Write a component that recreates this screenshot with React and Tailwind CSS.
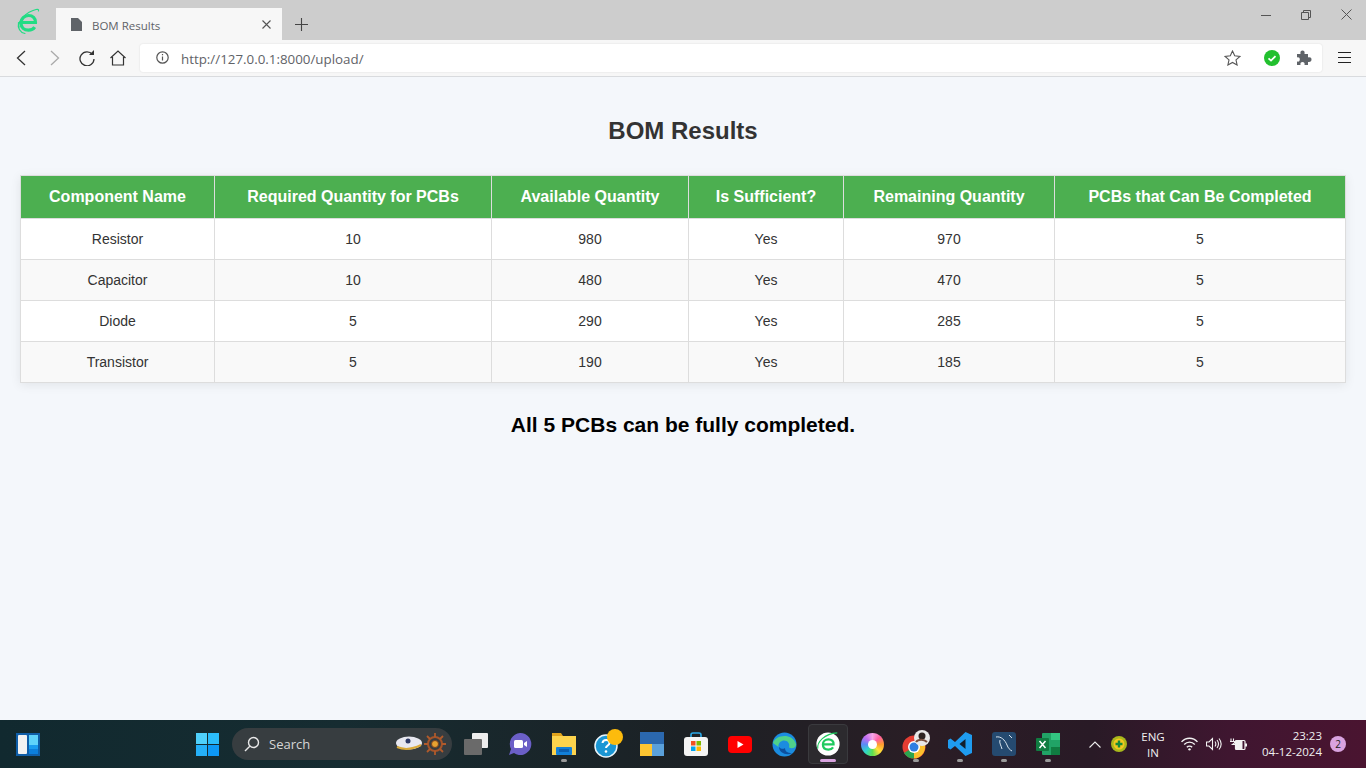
import React from 'react';

const columns = [
  { name: 'Component Name', width: 194 },
  { name: 'Required Quantity for PCBs', width: 277 },
  { name: 'Available Quantity', width: 197 },
  { name: 'Is Sufficient?', width: 155 },
  { name: 'Remaining Quantity', width: 211 },
  { name: 'PCBs that Can Be Completed', width: 291 },
];

const rows = [
  ['Resistor', 10, 980, 'Yes', 970, 5],
  ['Capacitor', 10, 480, 'Yes', 470, 5],
  ['Diode', 5, 290, 'Yes', 285, 5],
  ['Transistor', 5, 190, 'Yes', 185, 5],
];

const uiFont = "font-['Open_Sans','Noto_Sans',sans-serif]";

function BrowserLogo() {
  return (
    <svg width="27" height="27" viewBox="0 0 27 27" fill="none">
      <path d="M6.500 14.500h14c.3-4.500-3-7-6.800-7-4.400 0-7.700 3.300-7.700 7.500 0 4.400 3.300 7.200 7.500 7.200 2.700 0 4.900-1 6.200-3" stroke="#22dc84" strokeWidth="3.200" />
      <path d="M4 19C2.500 13 11 4 21 1.500c2-.5 2.800 0 2.500 1.500" stroke="#22dc84" strokeWidth="1.200" strokeLinecap="round" />
      <path d="M3.500 14.500C2.500 20 5 24.500 10 25.500" stroke="#22dc84" strokeWidth="1.200" strokeLinecap="round" />
    </svg>
  );
}

function TitleBar() {
  return (
    <div className="flex h-10 shrink-0 items-end bg-[#cdcdcd]">
      <div className="mb-[5px] ml-[15px] mr-[14px] h-[27px] w-[27px]">
        <BrowserLogo />
      </div>
      <div className={`flex h-8 w-[226px] items-center bg-[#f7f7f7] pl-[15px] pr-[11px] ${uiFont}`}>
        <svg width="11" height="13" viewBox="0 0 11 13" fill="#5f6368">
          <path d="M0 0h7l4 4v9H0z" />
        </svg>
        <span className="ml-[10px] mt-[3px] flex-1 text-[11.500px] text-[#5f6368]">BOM Results</span>
        <svg width="9" height="9" viewBox="0 0 9 9" stroke="#555" strokeWidth="1.100">
          <path d="M.5.5l8 8M8.500.5l-8 8" />
        </svg>
      </div>
      <svg className="mb-[9px] ml-[13px]" width="13" height="13" viewBox="0 0 13 13" stroke="#444" strokeWidth="1.100">
        <path d="M6.500 0v13M0 6.500h13" />
      </svg>
      <div className="mb-[20px] ml-auto flex items-center">
        <div className="flex w-10 justify-center">
          <svg width="10" height="10" viewBox="0 0 10 10" stroke="#555"><path d="M0 5.500h10" /></svg>
        </div>
        <div className="flex w-10 justify-center">
          <svg width="10" height="10" viewBox="0 0 10 10" fill="none" stroke="#555">
            <path d="M.5 2.500h7v7h-7zM2.500 2.500v-2h7v7h-2" />
          </svg>
        </div>
        <div className="flex w-10 justify-center">
          <svg width="11" height="11" viewBox="0 0 11 11" stroke="#555"><path d="M.5.5l10 10M10.500.5l-10 10" /></svg>
        </div>
      </div>
    </div>
  );
}

function Toolbar() {
  return (
    <div className="flex h-[37px] shrink-0 items-center border-b border-[#d9dbde] bg-[#f7f7f7] pb-[1px]">
      <svg className="ml-[16px]" width="10" height="16" viewBox="0 0 10 16" fill="none" stroke="#333" strokeWidth="1.300">
        <path d="M9 1L1.500 8 9 15" />
      </svg>
      <svg className="ml-[24px]" width="10" height="16" viewBox="0 0 10 16" fill="none" stroke="#aaa" strokeWidth="1.300">
        <path d="M1 1l7.500 7L1 15" />
      </svg>
      <svg className="ml-[19px]" width="16" height="16" viewBox="0 0 16 16" fill="none" stroke="#333" strokeWidth="1.300">
        <path d="M13.500 4.500A7 7 0 1 0 15 9" />
        <path d="M10 5h5V0z" fill="#333" stroke="none" />
      </svg>
      <svg className="ml-[15px]" width="16" height="16" viewBox="0 0 16 16" fill="none" stroke="#333" strokeWidth="1.200">
        <path d="M.5 8L8 1l7.500 7M2.500 7v8h11V7" />
      </svg>
      <div className="ml-[14px] flex h-7 w-[1182px] items-center rounded-[3px] bg-white pl-[16px] pr-[10px] shadow-[0_0_2px_rgba(0,0,0,0.12)]">
        <svg width="13" height="13" viewBox="0 0 13 13" fill="none" stroke="#555" strokeWidth="1.200">
          <circle cx="6.500" cy="6.500" r="5.700" />
          <path d="M6.500 5.500v4M6.500 3v1.300" />
        </svg>
        <span className={`ml-[12px] mt-[3px] flex-1 text-[13.350px] text-[#5f6368] ${uiFont}`}>http://127.0.0.1:8000/upload/</span>
        <svg width="17" height="16" viewBox="0 0 17 16" fill="none" stroke="#555" strokeWidth="1.100">
          <path d="M8.500 1l2.200 4.800 5.200.6-3.900 3.500 1.100 5.100-4.600-2.600L3.900 15 5 9.900 1.100 6.400l5.200-.6z" />
        </svg>
        <svg className="ml-[23px]" width="16" height="16" viewBox="0 0 16 16" fill="none">
          <circle cx="8" cy="8" r="8" fill="#22c02e" />
          <path d="M4.500 8.300l2.500 2.300 4.500-4.500" stroke="#fff" strokeWidth="1.800" />
        </svg>
        <svg className="ml-[16px]" width="16" height="16" viewBox="0 0 16 16" fill="#5f6368">
          <path d="M1 4h3.500C4 1.500 5 .5 6.500.5S9 1.500 8.500 4H12v3.500c2.500-.5 3.500.5 3.500 2s-1 3-3.500 2.500V15H8.500c.5-2-.5-3-2-3s-2.500 1-2 3H1v-3.500c2 .5 2.800-.5 2.800-2S3 7 1 7.500z" />
        </svg>
      </div>
      <svg className="ml-[16px]" width="13" height="11" viewBox="0 0 13 11" stroke="#222" strokeWidth="1.100">
        <path d="M0 .5h13M0 5.500h13M0 10.500h13" />
      </svg>
    </div>
  );
}

function ResultsTable() {
  return (
    <table className="w-[1325px] table-fixed border-collapse bg-white shadow-[0_2px_10px_rgba(0,0,0,0.08)]">
      <colgroup>
        {columns.map(col => (
          <col key={col.name} style={{ width: col.width }} />
        ))}
      </colgroup>
      <thead>
        <tr className="bg-[#4caf50] text-white">
          {columns.map(col => (
            <th key={col.name} className="h-[43px] border border-[#ddd] p-0 text-center text-[16px] font-bold">
              {col.name}
            </th>
          ))}
        </tr>
      </thead>
      <tbody>
        {rows.map((row, r) => (
          <tr key={row[0]} className={r % 2 === 1 ? 'bg-[#f9f9f9]' : 'bg-white'}>
            {row.map((cell, c) => (
              <td key={c} className="h-[41px] border border-[#ddd] p-0 text-center text-[14px] text-[#333]">
                {cell}
              </td>
            ))}
          </tr>
        ))}
      </tbody>
    </table>
  );
}

function Dash({ active }) {
  return <span className={active ? 'absolute bottom-[1px] h-[3px] w-4 rounded-full bg-[#d9a3e0]' : 'absolute bottom-[2px] h-[3px] w-[6px] rounded-full bg-[#9a9a9a]'} />;
}

function TaskIcon({ children, dash, active }) {
  return (
    <div className={`relative flex h-10 w-10 items-center justify-center rounded-[4px] ${active ? 'border border-[#3a3a3e] bg-[#2c2a2e]' : ''}`}>
      {children}
      {dash && <Dash active={active} />}
    </div>
  );
}

function Taskbar() {
  return (
    <div className={`flex h-12 shrink-0 items-center bg-[linear-gradient(90deg,#11292f_0%,#162c31_25%,#1c2125_50%,#2a1d25_68%,#291a26_80%,#3f1630_90%,#4a1430_100%)] text-white ${uiFont}`}>
      <svg className="ml-[16px]" width="24" height="23" viewBox="0 0 24 23">
        <rect width="24" height="23" fill="#0f5ea8" />
        <rect x="2" y="2" width="9" height="19" rx="1" fill="#f2f2f2" />
        <rect x="13" y="2" width="9" height="10" fill="#5fd3fb" />
        <rect x="13" y="12" width="9" height="4" fill="#1a9cf0" />
        <rect x="13" y="16" width="9" height="5" fill="#0c7fdc" />
      </svg>
      <svg className="ml-[156px]" width="23" height="23" viewBox="0 0 23 23">
        <rect width="11" height="11" fill="#4fd0fb" />
        <rect x="12" width="11" height="11" fill="#2bbcfa" />
        <rect y="12" width="11" height="11" fill="#25b0f8" />
        <rect x="12" y="12" width="11" height="11" fill="#0d98f5" />
      </svg>
      <div className="ml-[13px] flex h-8 w-[220px] items-center rounded-full bg-[#373d40] pl-[12px]">
        <svg width="16" height="16" viewBox="0 0 16 16" fill="none" stroke="#e8e8e8" strokeWidth="1.400">
          <circle cx="9.500" cy="6.500" r="5" />
          <path d="M5.800 10.200L1 15" />
        </svg>
        <span className="ml-[9px] mt-[1px] text-[13px] text-[#d6d6d6]">Search</span>
        <svg className="ml-[85px]" width="28" height="16" viewBox="0 0 28 16">
          <ellipse cx="14" cy="7" rx="13" ry="6.500" fill="#e8e8f0" />
          <path d="M2 11c7 3 16 2 24-2" stroke="#d9a93a" strokeWidth="2" fill="none" />
          <circle cx="13" cy="5" r="2.500" fill="#2e3a66" />
        </svg>
        <svg width="24" height="24" viewBox="0 0 24 24" fill="none">
          <circle cx="12" cy="12" r="7" stroke="#a4542a" strokeWidth="2" />
          <circle cx="12" cy="12" r="3.500" fill="#e6a231" stroke="#7a4020" />
          <path d="M12 1v4M12 19v4M1 12h4M19 12h4M4 4l3 3M17 17l3 3M20 4l-3 3M7 17l-3 3" stroke="#b05a2b" strokeWidth="1.800" />
        </svg>
      </div>
      <div className="ml-[4px] flex gap-1">
        <TaskIcon>
          <svg width="24" height="22" viewBox="0 0 24 22">
            <rect x="8" y="0" width="16" height="15" rx="1" fill="#ededed" />
            <rect x="0" y="6" width="18" height="16" rx="1" fill="#6a6a6a" />
          </svg>
        </TaskIcon>
        <TaskIcon>
          <svg width="24" height="24" viewBox="0 0 24 24">
            <path d="M12 1a11 11 0 1 1-6 20l-5 2 2-6A11 11 0 0 1 12 1z" fill="#6b5fc7" />
            <rect x="6" y="8" width="9" height="8" rx="1.500" fill="#fff" />
            <path d="M16 11l3-2v6l-3-2z" fill="#fff" />
          </svg>
        </TaskIcon>
        <TaskIcon dash>
          <svg width="24" height="24" viewBox="0 0 24 24">
            <path d="M0 1h9l2 3h13v19H0z" fill="#e0a31c" />
            <rect x="0" y="4" width="24" height="19" fill="#fcd34d" />
            <rect x="4" y="15" width="16" height="8" rx="1" fill="#1280d8" />
            <rect x="7" y="17" width="10" height="3" fill="#0b5fb0" />
          </svg>
        </TaskIcon>
        <TaskIcon>
          <svg width="30" height="30" viewBox="0 0 30 30">
            <circle cx="13" cy="17" r="11" fill="#1a96d4" stroke="#e8f4fa" strokeWidth="1.500" />
            <path d="M9.500 14c.5-4 7-4 7 0 0 2.500-3.500 2.500-3.500 5" fill="none" stroke="#fff" strokeWidth="2" />
            <circle cx="13" cy="22.500" r="1.300" fill="#fff" />
            <circle cx="22" cy="8" r="8" fill="#fdbb0d" />
          </svg>
        </TaskIcon>
        <TaskIcon>
          <svg width="24" height="24" viewBox="0 0 24 24">
            <rect width="24" height="12" fill="#2b68ae" />
            <rect y="12" width="12" height="12" fill="#fdc531" />
            <rect x="12" y="12" width="12" height="12" fill="#5aa0da" />
          </svg>
        </TaskIcon>
        <TaskIcon>
          <svg width="24" height="24" viewBox="0 0 24 24">
            <path d="M7 6V3a2 2 0 0 1 2-2h6a2 2 0 0 1 2 2v3" fill="none" stroke="#2aa8e8" strokeWidth="1.600" />
            <rect y="5" width="24" height="19" rx="3" fill="#f4f4f4" />
            <rect x="7" y="9" width="4.500" height="4.500" fill="#f25022" />
            <rect x="12.500" y="9" width="4.500" height="4.500" fill="#7fba00" />
            <rect x="7" y="14.500" width="4.500" height="4.500" fill="#00a4ef" />
            <rect x="12.500" y="14.500" width="4.500" height="4.500" fill="#ffb900" />
          </svg>
        </TaskIcon>
        <TaskIcon>
          <svg width="24" height="17" viewBox="0 0 24 17">
            <rect width="24" height="17" rx="4" fill="#f00" />
            <path d="M9.500 5l6 3.500-6 3.500z" fill="#fff" />
          </svg>
        </TaskIcon>
        <TaskIcon>
          <svg width="25" height="25" viewBox="0 0 25 25">
            <circle cx="12.500" cy="12.500" r="12" fill="#1b8ce0" />
            <path d="M1 11C3 3 20 0 24 12c.5 4-4 5-7 3.500 1.500-5-3-8-7-6.500-3 1-4 4-3.500 6" fill="#4fd18a" />
            <path d="M7 15c0 6 8 9 13 6-5 0-7-2-7-5-2 1.500-4 1-6-1z" fill="#0c4f9e" />
          </svg>
        </TaskIcon>
        <TaskIcon dash active>
          <svg width="26" height="26" viewBox="0 0 28 28" fill="none">
            <circle cx="14" cy="14" r="12.500" fill="#fff" />
            <path d="M8 14.500h12c.3-3.500-2.300-5.500-5.500-5.500-3.500 0-6 2.500-6 5.500 0 3.500 2.500 5.500 6 5.500 2.200 0 4-.8 5-2.300" stroke="#1fca5f" strokeWidth="2.400" />
            <path d="M3 19C2 12 10 3 24 2" stroke="#1fca5f" strokeWidth="1.200" />
          </svg>
        </TaskIcon>
        <TaskIcon>
          <div className="flex h-[23px] w-[23px] items-center justify-center rounded-full bg-[conic-gradient(#f6a5e8,#ff5fa2,#ff9d2e,#ffe23a,#5ee04f,#2fd6c8,#5a8cf5,#c06cf0,#f6a5e8)] blur-[0.4px]">
            <div className="h-[9px] w-[9px] rounded-full bg-white" />
          </div>
        </TaskIcon>
        <TaskIcon dash>
          <svg width="30" height="30" viewBox="0 0 30 30">
            <circle cx="13" cy="18" r="11.500" fill="#e53d33" />
            <path d="M13 18L3 24a11.500 11.500 0 0 0 10 5.500z" fill="#2aa44f" />
            <path d="M13 18l10-5a11.500 11.500 0 0 1-10 16.500z" fill="#fbc02d" />
            <circle cx="13" cy="18" r="6" fill="#fff" />
            <circle cx="13" cy="18" r="4.500" fill="#2f7de1" />
            <circle cx="21" cy="9" r="8" fill="#e8e8e8" />
            <circle cx="21" cy="7" r="3.500" fill="#2d2422" />
            <path d="M15 13c2-3 8-3 11 0" stroke="#7a5040" strokeWidth="2" fill="none" />
          </svg>
        </TaskIcon>
        <TaskIcon dash>
          <svg width="24" height="24" viewBox="0 0 24 24">
            <path d="M17.500 0L24 3v18l-6.500 3L7 14l-4.500 3.500L0 16v-8l2.500-1.500L7 10z" fill="#1f9cf0" />
            <path d="M17.500 7l-6 5 6 5z" fill="#12202c" />
          </svg>
        </TaskIcon>
        <TaskIcon dash>
          <svg width="24" height="24" viewBox="0 0 24 24" fill="none">
            <rect width="24" height="24" rx="3" fill="#254a70" />
            <path d="M4 5c5-1 9 3 11 8 1 3 3 5 5 6M8 8c-1 3 1 5 2 9M17 3l3 3" stroke="#d9e4ee" strokeWidth="1" />
          </svg>
        </TaskIcon>
        <TaskIcon dash>
          <svg width="24" height="22" viewBox="0 0 24 22">
            <rect x="6" width="18" height="22" rx="1" fill="#21a366" />
            <rect x="15" width="9" height="7" fill="#33c481" />
            <rect x="15" y="14" width="9" height="8" fill="#107c41" />
            <rect y="5" width="13" height="13" rx="1" fill="#107c41" />
            <path d="M3.500 8l6 7M9.500 8l-6 7" stroke="#fff" strokeWidth="1.500" />
          </svg>
        </TaskIcon>
      </div>
      <svg className="ml-[21px]" width="12" height="7" viewBox="0 0 12 7" fill="none" stroke="#eee" strokeWidth="1.100">
        <path d="M.5 6.500L6 1l5.500 5.500" />
      </svg>
      <svg className="ml-[10px]" width="16" height="16" viewBox="0 0 16 16">
        <circle cx="8" cy="8" r="8" fill="#a9b81c" />
        <circle cx="8" cy="8" r="5.500" fill="#f4c81e" />
        <path d="M8 4.500v7M4.500 8h7" stroke="#168a3a" strokeWidth="2.400" />
      </svg>
      <div className="ml-[12px] mt-[2px] w-[28px] text-center text-[11.500px] leading-[16px] text-[#f0f0f0]">
        <div>ENG</div>
        <div>IN</div>
      </div>
      <svg className="ml-[14px]" width="17" height="14" viewBox="0 0 16 13" fill="none" stroke="#f2f2f2" strokeWidth="1.300">
        <path d="M.5 4.500c4-4.500 11-4.500 15 0M3 7c2.800-3 7.200-3 10 0M5.500 9.500c1.300-1.400 3.700-1.400 5 0" />
        <circle cx="8" cy="11.500" r="1.100" fill="#f2f2f2" stroke="none" />
      </svg>
      <svg className="ml-[8px]" width="16" height="14" viewBox="0 0 16 14" fill="none" stroke="#f2f2f2" strokeWidth="1.100">
        <path d="M.5 5v4h2.500l3.500 3.500v-11L3 5zM9 4.500c1 1.500 1 3.500 0 5M11 3c1.800 2.400 1.800 5.600 0 8M13 1.500c2.600 3.300 2.600 7.700 0 11" />
      </svg>
      <svg className="ml-[8px]" width="17" height="13" viewBox="0 0 17 13" fill="none" stroke="#f2f2f2">
        <rect x="5.500" y="2.500" width="9.500" height="9" rx="1" strokeWidth="1.200" />
        <rect x="5.500" y="2.500" width="7" height="9" fill="#f2f2f2" stroke="none" />
        <rect x="15" y="5.500" width="2" height="3" fill="#f2f2f2" stroke="none" />
        <path d="M1 .5v3M3.500 .5v3M0 3.500h4.500v1.500l-2 1.500H5.500" strokeWidth="1.100" />
      </svg>
      <div className="ml-auto w-[70px] text-right text-[11.500px] leading-[16px] text-[#f0f0f0]">
        <div>23:23</div>
        <div>04-12-2024</div>
      </div>
      <div className="ml-[8px] mr-[20px] flex h-4 w-4 items-center justify-center rounded-full bg-[#d9a3e0] text-[10px] text-[#222]">2</div>
    </div>
  );
}

export default function App() {
  return (
    <div className="flex h-screen w-full flex-col overflow-hidden bg-[#f4f7fb] font-['Liberation_Sans',Arial,sans-serif]">
      <TitleBar />
      <Toolbar />
      <main className="flex-1 px-5">
        <h1 className="mb-[30px] mt-[40px] text-center text-[24px] font-bold leading-[28px] text-[#333]">BOM Results</h1>
        <ResultsTable />
        <p className="mt-[30px] text-center text-[21px] font-bold leading-[24px] text-black">All 5 PCBs can be fully completed.</p>
      </main>
      <Taskbar />
    </div>
  );
}
